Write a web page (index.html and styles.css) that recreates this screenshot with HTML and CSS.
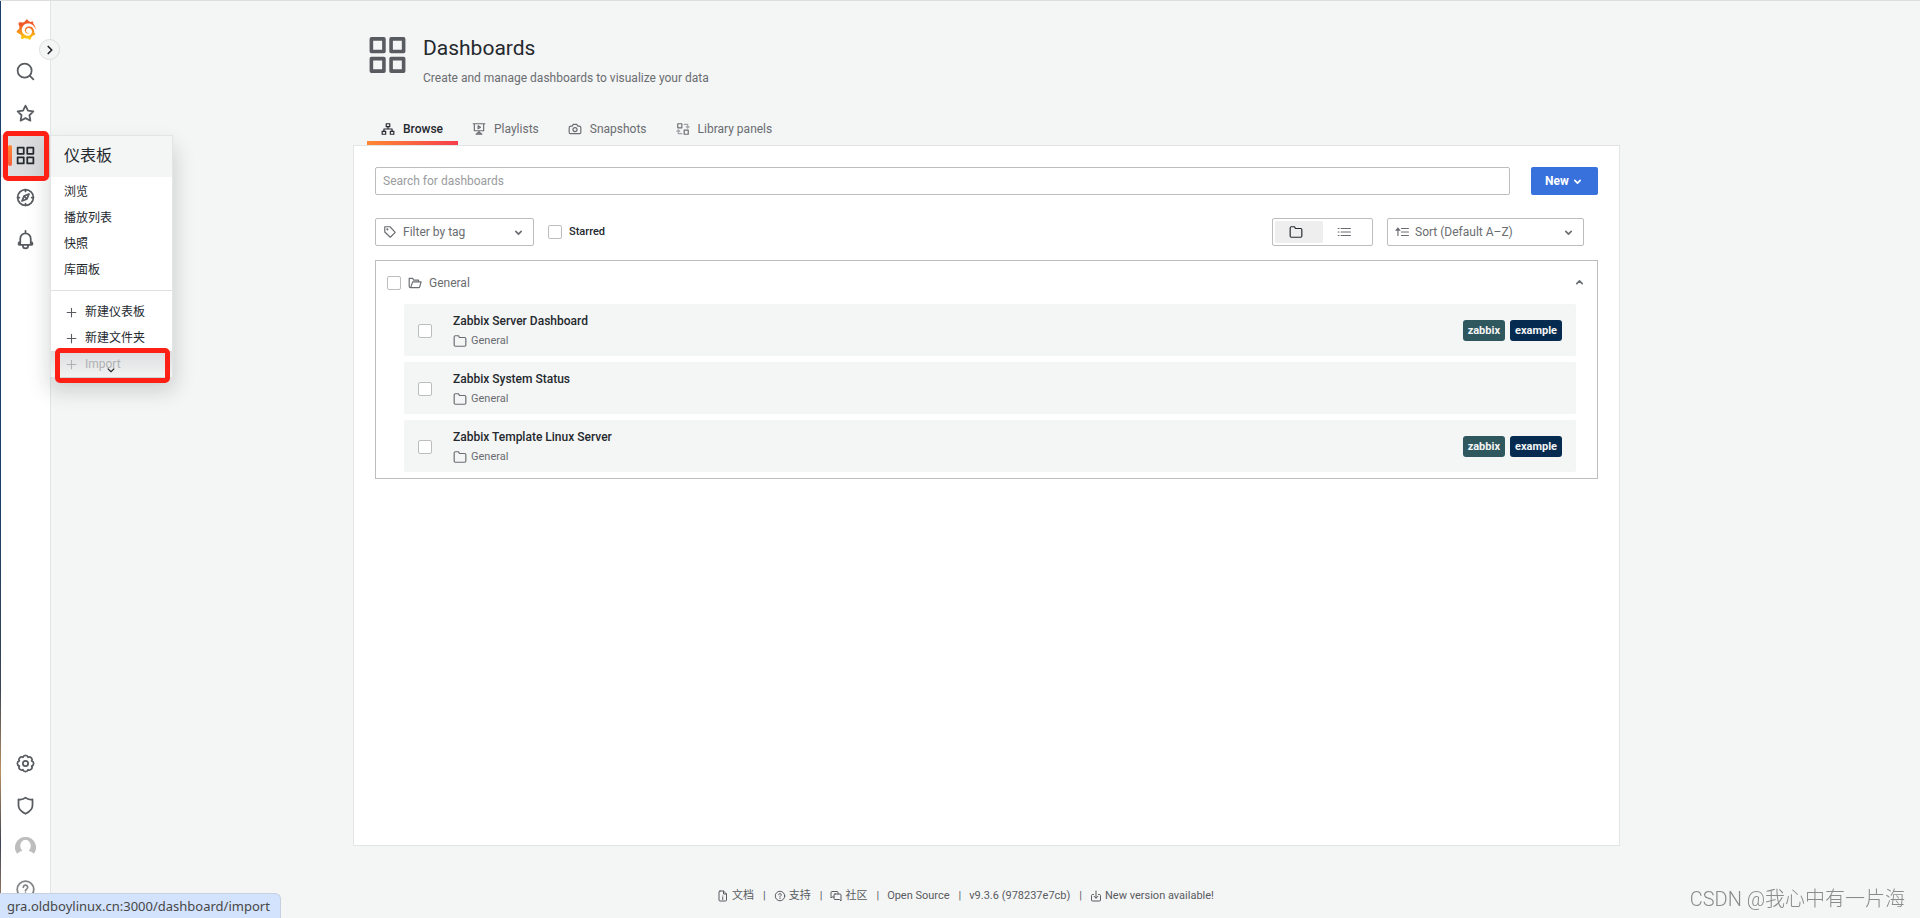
FILE: index.html
```html
<!DOCTYPE html>
<html lang="zh">
<head>
<meta charset="utf-8">
<title>Dashboards - Grafana</title>
<link rel="stylesheet" href="styles.css">
</head>
<body>
<svg class="sprite" aria-hidden="true">
  <defs>
    <linearGradient id="logo-fill" gradientUnits="userSpaceOnUse" x1="175" y1="365" x2="175" y2="0">
      <stop offset="0" stop-color="#fcd80a"/><stop offset=".35" stop-color="#f99a1c"/><stop offset=".7" stop-color="#f05a28"/>
    </linearGradient>
  </defs>
  <symbol id="apps" viewBox="0 0 24 24"><path class="solid" d="M10,13H3a1,1,0,0,0-1,1v7a1,1,0,0,0,1,1h7a1,1,0,0,0,1-1V14A1,1,0,0,0,10,13ZM9,20H4V15H9ZM21,2H14a1,1,0,0,0-1,1v7a1,1,0,0,0,1,1h7a1,1,0,0,0,1-1V3A1,1,0,0,0,21,2ZM20,9H15V4h5Zm1,4H14a1,1,0,0,0-1,1v7a1,1,0,0,0,1,1h7a1,1,0,0,0,1-1V14A1,1,0,0,0,21,13Zm-1,7H15V15h5ZM10,2H3A1,1,0,0,0,2,3v7a1,1,0,0,0,1,1h7a1,1,0,0,0,1-1V3A1,1,0,0,0,10,2ZM9,9H4V4H9Z"/></symbol>
  <symbol id="search" viewBox="0 0 24 24"><circle cx="11" cy="11" r="8"/><path d="M17 17l4 4"/></symbol>
  <symbol id="star" viewBox="0 0 24 24"><path d="M12 3l2.8 5.7 6.2.9-4.500 4.400 1.100 6.200L12 17.300 6.400 20.200l1.100-6.200L3 9.600l6.200-.9z"/></symbol>
  <symbol id="compass" viewBox="0 0 24 24"><circle cx="12" cy="12" r="9"/><path d="M12 3v2M12 19v2M3 12h2M19 12h2M16 8l-2.300 5.700L8 16l2.300-5.700zM10.500 10.500l3 3"/></symbol>
  <symbol id="bell" viewBox="0 0 24 24"><path d="M12 4V2M6 17v-6a6 6 0 0 1 12 0v6M5 18a1 1 0 0 1-1-1a3 3 0 0 1 2-2.500M19 18a1 1 0 0 0 1-1a3 3 0 0 0-2-2.500M5 18h14M9 19a3 3 0 0 0 6 0"/></symbol>
  <symbol id="cog" viewBox="0 0 24 24"><path d="M19.020 9.090A3 3 0 0 1 19.020 14.910A3 3 0 0 1 14.910 19.020A3 3 0 0 1 9.090 19.020A3 3 0 0 1 4.980 14.910A3 3 0 0 1 4.980 9.090A3 3 0 0 1 9.090 4.980A3 3 0 0 1 14.910 4.980A3 3 0 0 1 19.020 9.090z"/><circle cx="12" cy="12" r="3"/></symbol>
  <symbol id="shield" viewBox="0 0 24 24"><path d="M4 5c3 .6 5.700 0 8-2c2.300 2 5 2.600 8 2v7c0 4-3 7-8 9.500c-5-2.500-8-5.500-8-9.500z"/></symbol>
  <symbol id="help" viewBox="0 0 24 24"><circle cx="12" cy="12" r="9.500"/><path d="M9.500 9.500a2.500 2.500 0 1 1 3.700 2.200q-1.200.6-1.200 1.800M12 16v1.200"/></symbol>
  <symbol id="right" viewBox="0 0 24 24"><path d="M9 6l6 6-6 6"/></symbol>
  <symbol id="down" viewBox="0 0 24 24"><path d="M7 10l5 5 5-5"/></symbol>
  <symbol id="up" viewBox="0 0 24 24"><path d="M7 14l5-5 5 5"/></symbol>
  <symbol id="plus" viewBox="0 0 24 24"><path d="M12 4v16M4 12h16"/></symbol>
  <symbol id="sitemap" viewBox="0 0 24 24"><path d="M9 3h6v5H9zM2 16h6v5H2zM16 16h6v5h-6zM12 8v4M5 16v-4h14v4"/></symbol>
  <symbol id="playlist" viewBox="0 0 24 24"><path d="M2 3h20M4 3v12h16V3M12 15v6M8 21h8M7 21l5-4 5 4M10.500 6.500v5l4-2.500z"/></symbol>
  <symbol id="camera" viewBox="0 0 24 24"><path d="M5 7h2.500L9 4h6l1.500 3H19a3 3 0 0 1 3 3v8a2 2 0 0 1-2 2H4a2 2 0 0 1-2-2v-8a3 3 0 0 1 3-3z"/><circle cx="12" cy="13" r="3.500"/></symbol>
  <symbol id="library" viewBox="0 0 24 24"><path d="M3 3h7v7H3zM14 14h7v7h-7z"/><path class="faint" d="M14 4h6v6M17.500 8l2.500 2.500L22.500 8M10 20H4v-6M1.500 16L4 13.500 6.500 16"/></symbol>
  <symbol id="tag" viewBox="0 0 24 24"><path d="M3 3h9l9 9.500-8.500 8.500L3 12z"/><circle cx="7.500" cy="7.500" r=".8"/></symbol>
  <symbol id="folder" viewBox="0 0 24 24"><path d="M4 3h5.500l1.500 3h9a2 2 0 0 1 2 2v11a2 2 0 0 1-2 2H4a2 2 0 0 1-2-2V5a2 2 0 0 1 2-2z"/></symbol>
  <symbol id="folder-open" viewBox="0 0 24 24"><path d="M4.500 20a2.500 2.500 0 0 1-2.500-2.500V4h6l1.500 3H18v3M4.500 20L8 10h14.500L20 18.500a2 2 0 0 1-2 1.500z"/></symbol>
  <symbol id="list" viewBox="0 0 24 24"><path d="M7 6h16M7 12h16M7 18h16M2 6h1.500M2 12h1.500M2 18h1.500"/></symbol>
  <symbol id="sort" viewBox="0 0 24 24"><path d="M11 6h12M11 12h12M11 18h12M5 18V7"/><path class="solid" d="M0 10L5 4l5 6z"/></symbol>
  <symbol id="doc" viewBox="0 0 24 24"><path d="M6 2h7l6 6v12a2 2 0 0 1-2 2H6a2 2 0 0 1-2-2V4a2 2 0 0 1 2-2zM13 2v6h6M11.500 12v.5M11.500 15v4"/></symbol>
  <symbol id="chat" viewBox="0 0 24 24"><path d="M8 14H4l-2 2V5a2 2 0 0 1 2-2h10a2 2 0 0 1 2 2v3M10 8h10a2 2 0 0 1 2 2v12l-3-3h-9a2 2 0 0 1-2-2v-7a2 2 0 0 1 2-2z"/></symbol>
  <symbol id="download" viewBox="0 0 24 24"><path d="M7 9H5a2 2 0 0 0-2 2v9a2 2 0 0 0 2 2h14a2 2 0 0 0 2-2v-9a2 2 0 0 0-2-2h-2M12 2v14M8 12.500l4 4 4-4"/></symbol>
  <symbol id="avatar" viewBox="0 0 24 24"><path d="M12 0a12 12 0 0 1 9.500 19.300C20 17.500 18 16.500 15.500 15.800A6 7 0 1 0 8.500 15.800C6 16.500 4 17.500 2.500 19.300A12 12 0 0 1 12 0z" fill="#bdbdbd" stroke="none"/></symbol>
  <symbol id="logo" viewBox="0 0 351 365"><path fill="url(#logo-fill)" stroke="none" d="M342,161.2c-0.6-6.1-1.6-13.1-3.6-20.9c-2-7.7-5-16.2-9.4-25c-4.4-8.8-10.1-17.9-17.5-26.8c-2.9-3.5-6.1-6.9-9.5-10.2c5.1-20.3-6.2-37.9-6.2-37.9c-19.5-1.2-31.9,6.1-36.5,9.4c-0.8-0.3-1.5-0.7-2.3-1c-3.3-1.3-6.7-2.6-10.3-3.7c-3.5-1.1-7.1-2.1-10.8-3c-3.7-0.9-7.4-1.6-11.2-2.2c-0.7-0.1-1.3-0.2-2-0.3c-8.5-27.2-32.9-38.6-32.9-38.6c-27.3,17.3-32.4,41.5-32.4,41.5s-0.1,0.5-0.3,1.4c-1.5,0.4-3,0.9-4.5,1.3c-2.1,0.6-4.2,1.4-6.2,2.2c-2.1,0.8-4.1,1.6-6.2,2.5c-4.1,1.8-8.2,3.8-12.2,6c-3.9,2.2-7.7,4.6-11.4,7.1c-0.5-0.2-1-0.4-1-0.4c-37.8-14.4-71.3,2.9-71.3,2.9c-3.1,40.2,15.1,65.5,18.7,70.1c-0.9,2.5-1.7,5-2.5,7.5c-2.8,9.1-4.9,18.4-6.2,28.1c-0.2,1.4-0.4,2.8-0.5,4.2C18.8,192.7,8.5,228,8.5,228c29.1,33.500,63.1,35.600,63.1,35.600c0,0,0.1-0.1,0.1-0.1c4.3,7.7,9.3,15,14.900,21.900c2.400,2.900,4.800,5.600,7.400,8.300c-10.600,30.400,1.500,55.600,1.500,55.600c32.400,1.200,53.700-14.200,58.200-17.700c3.200,1.100,6.500,2.100,9.800,2.900c10,2.600,20.200,4.100,30.400,4.500c2.500,0.1,5.1,0.2,7.6,0.1l1.2,0l0.8,0l1.6,0l1.6-0.1l0,0.1c15.3,21.8,42.1,24.9,42.1,24.9c19.1-20.1,20.2-40.1,20.2-44.4l0,0c0,0,0-0.1,0-0.3c0-0.4,0-0.6,0-0.6l0,0c0-0.3,0-0.6,0-0.9c4-2.8,7.8-5.8,11.4-9.1c7.6-6.9,14.3-14.8,19.9-23.3c0.5-0.8,1-1.6,1.5-2.4c21.6,1.2,36.9-13.4,36.9-13.4c-3.6-22.5-16.4-33.5-19.1-35.6l0,0c0,0-0.1-0.1-0.3-0.2c-0.2-0.1-0.2-0.2-0.2-0.2c-0.1-0.1-0.3-0.2-0.5-0.3c0.1-1.4,0.2-2.7,0.3-4.1c0.2-2.4,0.2-4.9,0.2-7.3l0-1.8l0-0.9l0-0.5l-0.1-2.1l-0.1-2c0-0.7-0.1-1.3-0.2-1.9c-0.1-0.6-0.1-1.3-0.2-1.9l-0.2-1.9l-0.3-1.9c-0.4-2.5-0.8-4.9-1.4-7.4c-2.3-9.7-6.1-18.9-11-27.2c-5-8.3-11.2-15.6-18.3-21.8c-7-6.2-14.9-11.2-23.1-14.9c-8.3-3.7-16.9-6.1-25.5-7.2c-4.3-0.6-8.6-0.8-12.9-0.7l-1.6,0l-0.9,0l-0.7,0l-1.6,0.1c-0.6,0-1.2,0.1-1.7,0.1c-2.2,0.2-4.4,0.5-6.5,0.9c-8.6,1.6-16.7,4.7-23.8,9c-7.1,4.3-13.3,9.6-18.3,15.6c-5,6-8.9,12.7-11.6,19.6c-2.7,6.9-4.2,14.1-4.6,21c-0.1,1.7-0.1,3.5-0.1,5.2c0,0.4,0,0.9,0,1.3l0.1,1.4c0.1,0.8,0.1,1.7,0.2,2.5c0.3,3.5,1,6.9,1.9,10.1c1.9,6.5,4.9,12.4,8.6,17.4c3.7,5,8.2,9.1,12.9,12.4c4.7,3.2,9.8,5.5,14.8,7c5,1.5,10,2.1,14.7,2.1l3.5-0.1c0.5,0,1-0.1,1.5-0.1l1.8-0.3c0.6-0.1,1.1-0.2,1.7-0.3c0.6-0.1,1.1-0.2,1.6-0.4c1.1-0.2,2.1-0.6,3.1-0.9c2-0.7,4-1.5,5.7-2.4c1.8-0.9,3.4-2,5-3c0.4-0.3,0.9-0.6,1.3-1c1.6-1.3,1.9-3.7,0.6-5.3c-1.1-1.4-3.1-1.8-4.7-0.9c-0.4,0.2-0.8,0.4-1.2,0.6c-1.4,0.7-2.8,1.3-4.3,1.8c-1.5,0.5-3.1,0.9-4.7,1.2c-0.8,0.1-1.6,0.2-2.5,0.3c-0.4,0-0.8,0.1-1.3,0.1l-2.4,0l-2.1-0.1l-0.7-0.1c-0.5-0.1-0.9-0.1-1.4-0.2c-3.7-0.5-7.4-1.6-10.9-3.2c-3.6-1.6-7-3.8-10.1-6.6c-3.1-2.8-5.8-6.1-7.9-9.9c-2.1-3.8-3.6-8-4.3-12.4c-0.3-2.2-0.5-4.5-0.4-6.7c0-0.6,0.1-1.2,0.1-1.800l0.100-1.700c0.1-1.2,0.3-2.4,0.5-3.6c1.7-9.6,6.5-19,13.9-26.1c1.9-1.8,3.9-3.4,6-4.9c2.1-1.5,4.4-2.8,6.8-3.9c2.4-1.1,4.8-2,7.4-2.7c2.5-0.7,5.1-1.1,7.8-1.4c1.3-0.1,2.6-0.2,4-0.2l3.100,0.100l1.1,0.1c2.9,0.2,5.7,0.6,8.5,1.3c5.6,1.2,11.1,3.3,16.2,6.1c10.2,5.7,18.9,14.5,24.2,25.1c2.7,5.3,4.6,11,5.5,16.9c0.2,1.5,0.4,3,0.5,4.5l0.1,1.1l0.1,1.1c0,0.4,0,0.8,0,1.1l0,3.200c0,0.7-0.1,1.9-0.1,2.6c-0.1,1.6-0.3,3.3-0.5,4.9c-0.2,1.6-0.5,3.2-0.8,4.8c-0.3,1.6-0.7,3.2-1.1,4.7c-0.8,3.1-1.8,6.2-3,9.3c-2.4,6-5.6,11.8-9.4,17.1c-7.7,10.6-18.2,19.2-30.2,24.7c-6,2.7-12.3,4.7-18.8,5.7c-3.2,0.6-6.5,0.9-9.8,1l-5,0c-1.8,0-3.5-0.1-5.3-0.3c-7-0.5-13.9-1.8-20.7-3.7c-6.7-1.9-13.2-4.6-19.4-7.8c-12.3-6.6-23.4-15.6-32-26.5c-4.3-5.4-8.1-11.3-11.2-17.4c-3.1-6.1-5.6-12.6-7.4-19.1c-1.8-6.6-2.9-13.3-3.4-20.1l-0.1-1.3l0-8.800c0.1-3.3,0.4-6.8,0.8-10.2c0.4-3.4,1-6.9,1.7-10.3c0.7-3.4,1.5-6.8,2.5-10.2c1.9-6.7,4.3-13.2,7.1-19.3c5.7-12.2,13.1-23.1,22-31.8c2.2-2.2,4.5-4.2,6.9-6.2c2.4-1.9,4.9-3.7,7.5-5.4c2.5-1.7,5.2-3.2,7.9-4.6c1.3-0.7,2.7-1.4,4.1-2c1.4-0.6,2.8-1.2,4.2-1.8c2.8-1.2,5.7-2.2,8.7-3.1c1.5-0.4,2.9-0.9,4.4-1.3c1.5-0.4,3-0.8,4.5-1.1c2.3-0.5,4.600-1,6.900-1.400l2.3-0.4c0.8-0.1,1.5-0.2,2.3-0.3l5.200-0.600l2.700-0.300c1.600-0.100,3.200-0.300,5-0.400c3.500-0.200,7.900-0.200,11.900-0.100c5.8,0.2,11.5,0.9,17,1.9c11.1,2.1,21.5,5.6,31,10.3c9.5,4.6,17.9,10.3,25.3,16.5c3.600,3.100,7,6.300,10.200,9.700c3.1,3.3,6,6.600,8.6,10c5.2,6.7,9.4,13.5,12.7,19.9c1.200,2.400,2.400,4.800,3.400,7.100c1.500,3.700,3.100,7.500,4.300,10.900c1.5,4.4,2.6,8.3,3.5,11.700c0.3,1.4,1.6,2.3,3,2.1c1.5-0.1,2.6-1.3,2.6-2.8C342.6,170.4,342.5,166.1,342,161.2z"/></symbol>
</svg>

<div class="app">
  <div class="edge"></div>
  <nav class="sidebar" aria-label="Main menu">
    <ul class="nav-list">
      <li><a class="nav-item" href="#" aria-label="Home"><svg class="icon logo"><use href="#logo"/></svg></a></li>
      <li><a class="nav-item" href="#" aria-label="Search"><svg class="icon nav-icon"><use href="#search"/></svg></a></li>
      <li><a class="nav-item" href="#" aria-label="Starred"><svg class="icon nav-icon"><use href="#star"/></svg></a></li>
      <li class="nav-active">
        <a class="nav-item current" href="#" aria-label="Dashboards"><svg class="icon nav-icon"><use href="#apps"/></svg></a>
        <div class="highlight highlight-nav"></div>
        <div class="flyout">
          <a class="flyout-title" href="#">仪表板</a>
          <ul class="flyout-list">
            <li><a href="#">浏览</a></li>
            <li><a href="#">播放列表</a></li>
            <li><a href="#">快照</a></li>
            <li><a href="#">库面板</a></li>
          </ul>
          <ul class="flyout-list flyout-create">
            <li><a href="#"><svg class="icon plus"><use href="#plus"/></svg>新建仪表板</a></li>
            <li><a href="#"><svg class="icon plus"><use href="#plus"/></svg>新建文件夹</a></li>
            <li class="import"><a href="#"><svg class="icon plus"><use href="#plus"/></svg>Import</a></li>
          </ul>
          <svg class="icon more"><use href="#down"/></svg>
          <div class="highlight highlight-import"></div>
        </div>
      </li>
      <li><a class="nav-item" href="#" aria-label="Explore"><svg class="icon nav-icon"><use href="#compass"/></svg></a></li>
      <li><a class="nav-item" href="#" aria-label="Alerting"><svg class="icon nav-icon"><use href="#bell"/></svg></a></li>
    </ul>
    <ul class="nav-list nav-bottom">
      <li><a class="nav-item" href="#" aria-label="Configuration"><svg class="icon nav-icon"><use href="#cog"/></svg></a></li>
      <li><a class="nav-item" href="#" aria-label="Server admin"><svg class="icon nav-icon"><use href="#shield"/></svg></a></li>
      <li><a class="nav-item" href="#" aria-label="Profile"><svg class="icon nav-icon"><use href="#avatar"/></svg></a></li>
      <li><a class="nav-item faded" href="#" aria-label="Help"><svg class="icon nav-icon"><use href="#help"/></svg></a></li>
    </ul>
    <button class="expand" type="button" aria-label="Expand menu"><svg class="icon"><use href="#right"/></svg></button>
  </nav>

  <main class="main">
    <div class="page">
      <header class="page-header">
        <svg class="icon page-icon"><use href="#apps"/></svg>
        <div>
          <h1>Dashboards</h1>
          <p class="subtitle">Create and manage dashboards to visualize your data</p>
        </div>
      </header>
      <nav class="tabs" aria-label="Dashboards">
        <a class="tab active" href="#"><svg class="icon"><use href="#sitemap"/></svg>Browse</a>
        <a class="tab" href="#"><svg class="icon"><use href="#playlist"/></svg>Playlists</a>
        <a class="tab" href="#"><svg class="icon"><use href="#camera"/></svg>Snapshots</a>
        <a class="tab" href="#"><svg class="icon"><use href="#library"/></svg>Library panels</a>
      </nav>

      <section class="panel">
        <div class="search-row">
          <input class="search" type="text" placeholder="Search for dashboards" aria-label="Search for dashboards">
          <button class="new" type="button">New<svg class="icon"><use href="#down"/></svg></button>
        </div>
        <div class="filter-row">
          <div class="select tag-select">
            <svg class="icon"><use href="#tag"/></svg>
            <select aria-label="Filter by tag"><option>Filter by tag</option></select>
            <svg class="icon caret"><use href="#down"/></svg>
          </div>
          <label class="starred"><input type="checkbox">Starred</label>
          <div class="layout-toggle" role="radiogroup" aria-label="Layout">
            <label><input type="radio" name="layout" aria-label="Folders" checked><svg class="icon"><use href="#folder"/></svg></label>
            <label><input type="radio" name="layout" aria-label="List"><svg class="icon"><use href="#list"/></svg></label>
          </div>
          <div class="select sort-select">
            <svg class="icon"><use href="#sort"/></svg>
            <select aria-label="Sort"><option>Sort (Default A–Z)</option></select>
            <svg class="icon caret"><use href="#down"/></svg>
          </div>
        </div>
        <div class="folder">
          <div class="folder-head">
            <input type="checkbox" aria-label="Select General">
            <svg class="icon"><use href="#folder-open"/></svg>
            <span>General</span>
            <button class="collapse" type="button" aria-label="Collapse General"><svg class="icon caret"><use href="#up"/></svg></button>
          </div>
          <ul class="items">
            <li class="item">
              <input type="checkbox" aria-label="Select Zabbix Server Dashboard">
              <div class="item-text"><a href="#">Zabbix Server Dashboard</a><span class="where"><svg class="icon"><use href="#folder"/></svg>General</span></div>
              <div class="tags"><button class="tag zabbix" type="button">zabbix</button><button class="tag example" type="button">example</button></div>
            </li>
            <li class="item">
              <input type="checkbox" aria-label="Select Zabbix System Status">
              <div class="item-text"><a href="#">Zabbix System Status</a><span class="where"><svg class="icon"><use href="#folder"/></svg>General</span></div>
            </li>
            <li class="item">
              <input type="checkbox" aria-label="Select Zabbix Template Linux Server">
              <div class="item-text"><a href="#">Zabbix Template Linux Server</a><span class="where"><svg class="icon"><use href="#folder"/></svg>General</span></div>
              <div class="tags"><button class="tag zabbix" type="button">zabbix</button><button class="tag example" type="button">example</button></div>
            </li>
          </ul>
        </div>
      </section>
    </div>
    <footer class="footer">
      <ul>
        <li><a href="#"><svg class="icon"><use href="#doc"/></svg>文档</a></li>
        <li><a href="#"><svg class="icon"><use href="#help"/></svg>支持</a></li>
        <li><a href="#"><svg class="icon"><use href="#chat"/></svg>社区</a></li>
        <li><a href="#">Open Source</a></li>
        <li><a href="#">v9.3.6 (978237e7cb)</a></li>
        <li><a href="#"><svg class="icon"><use href="#download"/></svg>New version available!</a></li>
      </ul>
    </footer>
  </main>
</div>
<div class="status">gra.oldboylinux.cn:3000/dashboard/import</div>
<div class="watermark">CSDN @我心中有一片海</div>
</body>
</html>
```

FILE: styles.css
```css
* { box-sizing: border-box; }

body {
  margin: 0;
  background: #f4f5f5;
  color: #24292e;
  font: 12px/18px Roboto, "Noto Sans CJK SC", sans-serif;
}

ul { list-style: none; margin: 0; padding: 0; }
a { color: inherit; text-decoration: none; }
button, input, select { font: inherit; color: inherit; margin: 0; }
button { cursor: pointer; padding: 0; }

.sprite { position: absolute; width: 0; height: 0; }

.icon {
  flex: none;
  display: block;
  width: 14px;
  height: 14px;
  fill: none;
  stroke: currentColor;
  stroke-width: 2;
  stroke-linejoin: round;
  stroke-linecap: round;
}
.solid { fill: currentColor; stroke: none; }
.faint { opacity: .6; }
.caret { width: 13px; height: 13px; stroke-width: 3; }

.app {
  display: grid;
  grid-template-columns: 1px 50px 1fr;
  min-height: 100vh;
  border-top: 1px solid #dcdddd;
}
.edge { background: linear-gradient(#1b3f68 55%, #3a4654 75%, #b98f63 84%, #3d4356 92%, #b98f63); }

/* Sidebar */
.sidebar {
  position: relative;
  z-index: 2;
  display: flex;
  flex-direction: column;
  justify-content: space-between;
  padding: 8px 0 7px;
  background: #fff;
  border-right: 1px solid #e3e5e5;
}
.nav-item {
  display: flex;
  align-items: center;
  justify-content: center;
  height: 42px;
  padding-bottom: 1px;
  color: #585b60;
}
.nav-icon { width: 21px; height: 21px; }
.logo { width: 20px; height: 21px; }
.faded { opacity: .75; }
.nav-active { position: relative; }
.current {
  color: #24292e;
  background: linear-gradient(90deg, #e2e2e4, #d4d5d7);
}
.current::before {
  content: "";
  position: absolute;
  left: 7px;
  top: 10px;
  width: 4px;
  height: 21px;
  border-radius: 2px;
  background: linear-gradient(#ff8833, #f55f3e);
}
.expand {
  position: absolute;
  top: 38px;
  right: -10px;
  display: grid;
  place-items: center;
  width: 21px;
  height: 21px;
  border: 1px solid #dcddde;
  border-radius: 50%;
  background: #f4f5f5;
}
.expand .icon { stroke-width: 3; }

.highlight {
  position: absolute;
  border: 5px solid #ff2015;
  border-radius: 5px;
  pointer-events: none;
}
.highlight-nav { inset: -4px 1px -4px 2px; z-index: 3; }
.highlight-import { inset: auto 2px -6px 4px; height: 35px; }

/* Flyout menu */
.flyout {
  position: absolute;
  top: 0;
  left: 49px;
  z-index: 2;
  width: 123px;
  background: #fff;
  border: 1px solid #e3e5e5;
  border-bottom: 0;
  box-shadow: 0 12px 20px 1px rgba(24, 26, 27, .18);
}
.flyout-title {
  display: block;
  padding: 7px 13px 9px;
  background: #f4f5f5;
  font-size: 16px;
  line-height: 25px;
}
.flyout-list { padding: 2px 0 7px; }
.flyout-list a {
  display: flex;
  align-items: center;
  gap: 7px;
  padding: 4px 13px;
}
.flyout-create { border-top: 1px solid #dfe1e1; padding: 8px 0 0; }
.plus { width: 13px; height: 13px; margin-left: 1px; color: #585b60; }
.import { background: linear-gradient(#dddedf, #f1f2f2); color: #b0b1b3; }
.import .plus { color: #b0b1b3; }
.more {
  position: absolute;
  bottom: 0;
  left: 53px;
}

/* Page */
.main {
  display: flex;
  flex-direction: column;
  min-width: 0;
  padding-left: 2px;
}
.page {
  flex: 1;
  display: flex;
  flex-direction: column;
  width: 100%;
  max-width: 1267px;
  margin: 0 auto;
}
.page-header {
  display: flex;
  gap: 14px;
  padding: 32px 13px 0;
}
.page-icon { width: 43px; height: 44px; color: #585b60; }
h1 {
  margin: 0;
  font-size: 21px;
  line-height: 30px;
  font-weight: 400;
}
.subtitle { margin: 6px 0 0; color: #6a6d71; }
.tabs {
  display: flex;
  margin-top: 26px;
  padding-left: 14px;
}
.tab {
  display: flex;
  align-items: center;
  gap: 8px;
  height: 32px;
  padding: 4px 15px 0 14px;
  color: #6a6d71;
  border-bottom: 4px solid transparent;
}
.tab.active {
  color: #24292e;
  font-weight: 500;
  border-image: linear-gradient(90deg, #ff8833, #f53e4c) 1;
  border-width: 0 0 4px;
}
.panel {
  flex: 1;
  padding: 21px;
  background: #fff;
  border: 1px solid #e3e5e5;
}
.search-row { display: flex; gap: 21px; }
.search {
  flex: 1;
  height: 28px;
  padding: 0 7px;
  border: 1px solid #bcbdbf;
  border-radius: 2px;
  background: #fff;
}
.search::placeholder { color: #9a9c9f; }
.new {
  display: flex;
  align-items: center;
  justify-content: center;
  gap: 2px;
  width: 67px;
  height: 28px;
  border: 0;
  border-radius: 2px;
  background: #3871dc;
  color: #fff;
  font-weight: 700;
}
.new .icon { width: 13px; height: 13px; stroke-width: 3; }
.filter-row {
  display: flex;
  align-items: center;
  gap: 14px;
  margin-top: 23px;
  padding-right: 14px;
}
.select {
  display: flex;
  align-items: center;
  height: 28px;
  padding: 0 8px 0 7px;
  border: 1px solid #bcbdbf;
  border-radius: 2px;
  color: #6a6d71;
}
.select select {
  flex: 1;
  min-width: 0;
  padding: 0 0 0 6px;
  border: 0;
  background: none;
  appearance: none;
}
.tag-select { width: 159px; }
.sort-select { width: 197px; }
input[type="checkbox"] {
  flex: none;
  appearance: none;
  width: 14px;
  height: 14px;
  border: 1px solid #bcbdbf;
  border-radius: 2px;
  background: #fff;
}
.starred {
  display: flex;
  align-items: center;
  gap: 7px;
  margin-right: auto;
  font-size: 11px;
  font-weight: 500;
}
.layout-toggle {
  display: flex;
  width: 101px;
  height: 28px;
  padding: 2px;
  border: 1px solid #bcbdbf;
  border-radius: 2px;
}
.layout-toggle label {
  display: grid;
  place-items: center;
  width: 48px;
  padding-right: 5px;
  border-radius: 2px;
  color: #6a6d71;
}
.layout-toggle input { position: absolute; appearance: none; }
.layout-toggle label:has(:checked) { background: #eee; color: #24292e; }

.folder {
  margin-top: 14px;
  padding: 0 21px 6px 28px;
  border: 1px solid #bcbdbf;
}
.folder-head {
  display: flex;
  align-items: center;
  gap: 7px;
  height: 43px;
  margin: 0 -10px 0 -17px;
  color: #6a6d71;
}
.collapse {
  margin-left: auto;
  border: 0;
  background: none;
}
.items { display: grid; gap: 6px; }
.item {
  display: flex;
  align-items: center;
  gap: 21px;
  height: 52px;
  padding: 1px 14px 0;
  border-radius: 2px;
  background: #f4f5f5;
}
.item-text {
  display: grid;
  gap: 2px;
  font-weight: 500;
}
.where {
  display: flex;
  align-items: center;
  gap: 4px;
  color: #6a6d71;
  font-size: 11px;
  font-weight: 400;
}
.tags { display: flex; gap: 5px; margin-left: auto; }
.tag {
  height: 21px;
  padding: 0 5px;
  border: 0;
  border-radius: 3px;
  color: #f4f5f5;
  font-size: 11px;
  font-weight: 700;
}
.zabbix { background: #2f575e; }
.example { background: #052b51; }

.footer {
  padding: 40px 42px 12px 0;
  color: #585b60;
  font-size: 11px;
  line-height: 20px;
}
.footer ul { display: flex; justify-content: center; }
.footer li { display: flex; }
.footer a { display: flex; align-items: center; gap: 3px; }
.footer .icon { width: 12px; height: 12px; }
.footer li + li::before {
  content: "|";
  padding: 0 8px 0 9px;
}

/* Overlays at the window edge */
.status {
  position: fixed;
  left: 0;
  bottom: 0;
  z-index: 5;
  padding: 2px 10px 2px 7px;
  border: 1px solid #c6d0e0;
  border-width: 1px 1px 0 0;
  border-radius: 0 6px 0 0;
  background: #d3e3fd;
  color: #474747;
  font: 13px/20px "Noto Sans", sans-serif;
}
.watermark {
  position: fixed;
  right: 15px;
  bottom: 4px;
  color: #8a8b8c;
  font: 300 20px/30px Roboto, "Noto Sans CJK SC", sans-serif;
}
```
